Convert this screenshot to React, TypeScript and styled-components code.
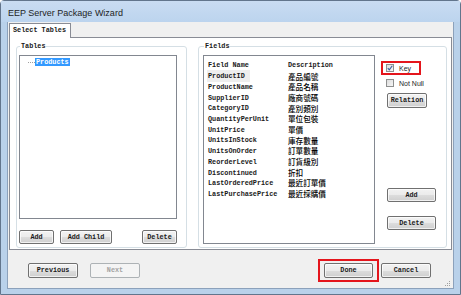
import React from "react";
import styled, { createGlobalStyle } from "styled-components";

const Global = createGlobalStyle`
  html, body { margin: 0; padding: 0; width: 461px; height: 295px; overflow: hidden; background: #ffffff; }
  #root { width: 461px; height: 295px; }
  * { box-sizing: border-box; }
`;

const monoFont = `
  font-family: "Liberation Mono", "Noto Sans CJK TC", monospace;
  font-size: 6.8px;
  font-weight: bold;
`;

const Window = styled.div`
  width: 461px;
  height: 295px;
  border: 1px solid #62758c;
  border-radius: 4px 4px 0 0;
  background: #b9d1ea;
  display: flex;
  flex-direction: column;
`;

const TitleBar = styled.div`
  height: 21px;
  flex: none;
  padding: 2px 0 0 7px;
  display: flex;
  align-items: center;
  background: linear-gradient(180deg, #c9dcf2 0%, #bcd4ee 100%);
  font-family: "Liberation Sans", Arial, sans-serif;
  font-size: 9px;
  color: #1e1e1e;
`;

const Frame = styled.div`
  flex: 1;
  padding: 0 6px 5px 6px;
  display: flex;
`;

const Content = styled.div`
  flex: 1;
  background: #f0f0f0;
  border: 1px solid #8ca1bb;
  border-top: none;
  padding: 0 1px;
  display: flex;
  flex-direction: column;
`;

const TabStrip = styled.div`
  height: 15px;
  flex: none;
  padding-top: 1px;
  display: flex;
`;

const Tab = styled.div`
  width: 62px;
  height: 15px;
  background: #ffffff;
  border: 1px solid #898c95;
  border-bottom: none;
  position: relative;
  z-index: 1;
  padding: 2px 0 0 3px;
  ${monoFont}
  color: #1a1a1a;
`;

const Panel = styled.div`
  height: 213px;
  flex: none;
  background: #ffffff;
  border: 1px solid #898c95;
  padding: 8px 4px 1px 6px;
  display: flex;
  gap: 11px;
`;

const GroupBox = styled.div<{ $w: number }>`
  width: ${(p) => p.$w}px;
  flex: none;
  position: relative;
  border: 1px solid #d5dfe5;
  border-radius: 3px;
  display: flex;
`;

const GroupLabel = styled.span<{ $left: number }>`
  position: absolute;
  top: -5px;
  left: ${(p) => p.$left}px;
  padding: 0 1px;
  background: #ffffff;
  ${monoFont}
  line-height: 9px;
  color: #1a1a1a;
`;

const TablesInner = styled.div`
  flex: 1;
  padding: 8px 9px 3px 2px;
  display: flex;
  flex-direction: column;
`;

const ListBox = styled.div`
  border: 1px solid #828790;
  background: #ffffff;
`;

const TreeBox = styled(ListBox)`
  flex: 1;
  padding: 2px 0 0 8px;
`;

const TreeItem = styled.div`
  display: flex;
  align-items: center;
  height: 8px;
`;

const TreeLine = styled.span`
  width: 7px;
  height: 0;
  border-top: 1px dotted #a0a0a0;
`;

const Selected = styled.span`
  background: #3399ff;
  color: #ffffff;
  padding: 0 1px;
  height: 8px;
  line-height: 8px;
  ${monoFont}
`;

const ButtonRow = styled.div`
  margin-top: 11px;
  display: flex;
  gap: 6px;
`;

const Button = styled.button<{ $w: number; $h?: number; $push?: boolean }>`
  width: ${(p) => p.$w}px;
  height: ${(p) => p.$h ?? 14}px;
  margin: 0;
  margin-left: ${(p) => (p.$push ? "auto" : "0")};
  padding: 0;
  border: 1px solid #707070;
  border-radius: 2px;
  background: linear-gradient(180deg, #f2f2f2 0%, #ebebeb 50%, #dddddd 51%, #cfcfcf 100%);
  box-shadow: inset 0 0 0 1px rgba(255, 255, 255, 0.7);
  ${monoFont}
  color: #1a1a1a;
  line-height: 1;
  &:disabled {
    border-color: #adb2b5;
    background: #f4f4f4;
    color: #a3a3a3;
    box-shadow: none;
  }
`;

const FieldsInner = styled.div`
  flex: 1;
  padding: 8px 0 3px 4px;
  display: flex;
`;

const FieldsList = styled(ListBox)`
  width: 172px;
  height: 189px;
  flex: none;
  padding-left: 4px;
`;

const HeaderRow = styled.div`
  height: 15px;
  display: flex;
  align-items: center;
  padding-top: 2px;
  ${monoFont}
  color: #1a1a1a;
`;

const Row = styled.div`
  height: 10.7px;
  display: flex;
  align-items: center;
`;

const NameCell = styled.span<{ $focus?: boolean }>`
  width: 80px;
  flex: none;
  height: 100%;
  display: flex;
  align-items: center;
  ${monoFont}
  color: #1a1a1a;
  span {
    background: ${(p) => (p.$focus ? "#eeeeee" : "transparent")};
    padding: 2px 5px 2px 1px;
    margin-left: -1px;
  }
`;

const HeadCell = styled.span<{ $w?: number }>`
  width: ${(p) => (p.$w ? `${p.$w}px` : "auto")};
  flex: none;
`;

const DescCell = styled.span`
  font-family: "Noto Sans CJK TC", "Noto Sans CJK SC", sans-serif;
  font-size: 7.6px;
  font-weight: 500;
  color: #000000;
  line-height: 1;
`;

const SideColumn = styled.div`
  margin-left: 6px;
  padding-top: 6px;
  display: flex;
  flex-direction: column;
  align-items: flex-start;
`;

const RedBox = styled.div<{ $px: number; $py: number }>`
  border: 2px solid #e4151c;
  padding: ${(p) => `${p.$py}px ${p.$px}px`};
  display: flex;
  align-items: center;
`;

const KeyBox = styled(RedBox)`
  width: 40px;
  height: 14px;
`;

const CheckRow = styled.label<{ $ml?: number; $mt?: number }>`
  display: flex;
  align-items: center;
  gap: 5px;
  height: 8px;
  margin-left: ${(p) => p.$ml ?? 0}px;
  margin-top: ${(p) => p.$mt ?? 0}px;
  font-family: "Liberation Sans", Arial, sans-serif;
  font-size: 7px;
  color: #1e1e1e;
`;

const Check = styled.span`
  width: 8px;
  height: 8px;
  flex: none;
  border: 1px solid #8e8f8f;
  background: linear-gradient(135deg, #dcdcdc 0%, #f6f6f6 100%);
  display: flex;
  align-items: center;
  justify-content: center;
`;

const SideButton = styled(Button)<{ $mt: number; $ml: number }>`
  margin-top: ${(p) => p.$mt}px;
  margin-left: ${(p) => p.$ml}px;
`;

const Footer = styled.div`
  flex: 1;
  position: relative;
  padding: 9px 21px 0 19px;
  display: flex;
  align-items: flex-start;
`;

const FooterLeft = styled.div`
  display: flex;
  gap: 12px;
  padding-top: 4px;
`;

const FooterRight = styled.div`
  margin-left: auto;
  display: flex;
  align-items: center;
  gap: 2px;
`;

const Grip = styled.svg`
  position: absolute;
  right: 1px;
  bottom: 1px;
`;

const fields: [string, string][] = [
  ["ProductID", "產品編號"],
  ["ProductName", "產品名稱"],
  ["SupplierID", "廠商號碼"],
  ["CategoryID", "產別類別"],
  ["QuantityPerUnit", "單位包裝"],
  ["UnitPrice", "單價"],
  ["UnitsInStock", "庫存數量"],
  ["UnitsOnOrder", "訂單數量"],
  ["ReorderLevel", "訂貨級別"],
  ["Discontinued", "折扣"],
  ["LastOrderedPrice", "最近訂單價"],
  ["LastPurchasePrice", "最近採購價"],
];

export default function App() {
  return (
    <>
      <Global />
      <Window>
        <TitleBar>EEP Server Package Wizard</TitleBar>
        <Frame>
          <Content>
            <TabStrip>
              <Tab>Select Tables</Tab>
            </TabStrip>
            <Panel>
              <GroupBox $w={171}>
                <GroupLabel $left={3}>Tables</GroupLabel>
                <TablesInner>
                  <TreeBox>
                    <TreeItem>
                      <TreeLine />
                      <Selected>Products</Selected>
                    </TreeItem>
                  </TreeBox>
                  <ButtonRow>
                    <Button $w={35}>Add</Button>
                    <Button $w={52}>Add Child</Button>
                    <Button $w={35} $push>
                      Delete
                    </Button>
                  </ButtonRow>
                </TablesInner>
              </GroupBox>
              <GroupBox $w={249}>
                <GroupLabel $left={5}>Fields</GroupLabel>
                <FieldsInner>
                  <FieldsList>
                    <HeaderRow>
                      <HeadCell $w={80}>Field Name</HeadCell>
                      <HeadCell>Description</HeadCell>
                    </HeaderRow>
                    {fields.map(([name, desc], i) => (
                      <Row key={name}>
                        <NameCell $focus={i === 0}>
                          <span>{name}</span>
                        </NameCell>
                        <DescCell>{desc}</DescCell>
                      </Row>
                    ))}
                  </FieldsList>
                  <SideColumn>
                    <KeyBox $px={3} $py={1}>
                      <CheckRow>
                        <Check>
                          <svg width="6" height="6" viewBox="0 0 6 6">
                            <path d="M0.8 3.2 L2.3 4.9 L5.3 0.8" fill="none" stroke="#3d5d9e" strokeWidth="1.1" />
                          </svg>
                        </Check>
                        Key
                      </CheckRow>
                    </KeyBox>
                    <CheckRow $ml={5} $mt={4}>
                      <Check />
                      Not Null
                    </CheckRow>
                    <SideButton $w={40} $h={15} $mt={6} $ml={6}>
                      Relation
                    </SideButton>
                    <SideButton $w={49} $mt={80} $ml={6}>
                      Add
                    </SideButton>
                    <SideButton $w={49} $mt={14} $ml={6}>
                      Delete
                    </SideButton>
                  </SideColumn>
                </FieldsInner>
              </GroupBox>
            </Panel>
            <Footer>
              <FooterLeft>
                <Button $w={50} $h={15}>
                  Previous
                </Button>
                <Button $w={50} $h={15} disabled>
                  Next
                </Button>
              </FooterLeft>
              <FooterRight>
                <RedBox $px={4} $py={2}>
                  <Button $w={49} $h={15}>
                    Done
                  </Button>
                </RedBox>
                <Button $w={50} $h={15}>
                  Cancel
                </Button>
              </FooterRight>
              <Grip width="6" height="6" viewBox="0 0 6 6">
                <rect x="4" y="0" width="1" height="1" fill="#a0a0a0" />
                <rect x="2" y="2" width="1" height="1" fill="#a0a0a0" />
                <rect x="4" y="2" width="1" height="1" fill="#a0a0a0" />
                <rect x="0" y="4" width="1" height="1" fill="#a0a0a0" />
                <rect x="2" y="4" width="1" height="1" fill="#a0a0a0" />
                <rect x="4" y="4" width="1" height="1" fill="#a0a0a0" />
              </Grip>
            </Footer>
          </Content>
        </Frame>
      </Window>
    </>
  );
}
